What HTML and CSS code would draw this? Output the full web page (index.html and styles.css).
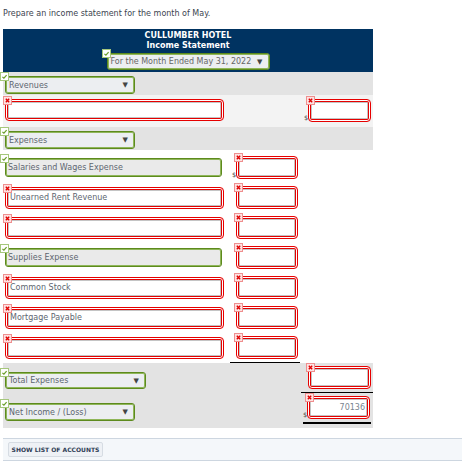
FILE: index.html
```html
<!doctype html>
<html lang="en">
<head>
    <meta charset="UTF-8">
    <title>Income Statement</title>
    <link rel="stylesheet" href="styles.css">
</head>
<body>
    <p class="prompt">Prepare an income statement for the month of May.</p>

    <div class="sheet">
        <!-- 表头 -->
        <div class="sheet-head">
            <div class="sheet-title">CULLUMBER HOTEL</div>
            <div class="sheet-title">Income Statement</div>
            <div class="fld fld-ok">
                <div class="pick pick-head">For the Month Ended May 31, 2022 <span class="arrow">&#9660;</span></div>
            </div>
        </div>

        <!-- 收入 -->
        <div class="row row-band">
            <div class="cell-label">
                <div class="fld fld-ok">
                    <div class="pick pick-sm">Revenues <span class="arrow">&#9660;</span></div>
                </div>
            </div>
        </div>
        <div class="row row-light">
            <div class="cell-label">
                <div class="fld fld-bad"><div class="box box-label"></div></div>
            </div>
            <div class="cell-mid"></div>
            <div class="cell-right">
                <span class="cur">$</span>
                <div class="fld fld-bad"><div class="box box-right"></div></div>
            </div>
        </div>

        <!-- 费用 -->
        <div class="row row-band row-exp">
            <div class="cell-label">
                <div class="fld fld-ok">
                    <div class="pick pick-sm">Expenses <span class="arrow">&#9660;</span></div>
                </div>
            </div>
        </div>

        <div class="list">
            <div class="row row-line">
                <div class="cell-label">
                    <div class="fld fld-ok"><div class="text-ok">Salaries and Wages Expense</div></div>
                </div>
                <div class="cell-mid">
                    <span class="cur">$</span>
                    <div class="fld fld-bad"><div class="box box-mid"></div></div>
                </div>
            </div>
            <div class="row row-line">
                <div class="cell-label">
                    <div class="fld fld-bad"><div class="box box-label">Unearned Rent Revenue</div></div>
                </div>
                <div class="cell-mid">
                    <div class="fld fld-bad"><div class="box box-mid"></div></div>
                </div>
            </div>
            <div class="row row-line">
                <div class="cell-label">
                    <div class="fld fld-bad"><div class="box box-label"></div></div>
                </div>
                <div class="cell-mid">
                    <div class="fld fld-bad"><div class="box box-mid"></div></div>
                </div>
            </div>
            <div class="row row-line">
                <div class="cell-label">
                    <div class="fld fld-ok"><div class="text-ok">Supplies Expense</div></div>
                </div>
                <div class="cell-mid">
                    <div class="fld fld-bad"><div class="box box-mid"></div></div>
                </div>
            </div>
            <div class="row row-line">
                <div class="cell-label">
                    <div class="fld fld-bad"><div class="box box-label">Common Stock</div></div>
                </div>
                <div class="cell-mid">
                    <div class="fld fld-bad"><div class="box box-mid"></div></div>
                </div>
            </div>
            <div class="row row-line">
                <div class="cell-label">
                    <div class="fld fld-bad"><div class="box box-label">Mortgage Payable</div></div>
                </div>
                <div class="cell-mid">
                    <div class="fld fld-bad"><div class="box box-mid"></div></div>
                </div>
            </div>
            <div class="row row-line">
                <div class="cell-label">
                    <div class="fld fld-bad"><div class="box box-label"></div></div>
                </div>
                <div class="cell-mid">
                    <div class="fld fld-bad"><div class="box box-mid"></div></div>
                </div>
            </div>
            <div class="row row-rule">
                <div></div>
                <div class="rule"></div>
            </div>
        </div>

        <!-- 合计 -->
        <div class="totals">
            <div class="row row-total">
                <div class="cell-label">
                    <div class="fld fld-ok">
                        <div class="pick pick-total">Total Expenses <span class="arrow">&#9660;</span></div>
                    </div>
                </div>
                <div></div>
                <div class="cell-sum">
                    <div class="fld fld-bad"><div class="box box-right"></div></div>
                </div>
            </div>
            <div class="row row-net">
                <div class="cell-label">
                    <div class="fld fld-ok">
                        <div class="pick pick-sm">Net Income / (Loss) <span class="arrow">&#9660;</span></div>
                    </div>
                </div>
                <div></div>
                <div class="cell-net">
                    <div class="net-wrap">
                        <span class="cur">$</span>
                        <div class="fld fld-bad"><div class="box box-right box-num">70136</div></div>
                    </div>
                </div>
            </div>
        </div>
    </div>

    <div class="accounts">
        <button class="accounts-btn">SHOW LIST OF ACCOUNTS</button>
    </div>
</body>
</html>
```

FILE: styles.css
```css
body {
    margin: 0;
    font-family: "DejaVu Sans", Verdana, sans-serif;
    font-size: 8px;
    color: #333;
    background: #fff;
}

.prompt {
    margin: 0;
    padding: 9px 3px 0;
    line-height: 10px;
    color: #3c4450;
}

.sheet {
    width: 370px;
    margin: 10px 0 0 3px;
}

.sheet-head {
    height: 43px;
    box-sizing: border-box;
    padding-top: 2px;
    background-color: #003361;
    text-align: center;
}

.sheet-title {
    color: #fff;
    font-weight: bold;
    font-size: 8px;
    line-height: 10px;
}

.sheet-head .fld {
    display: inline-block;
    margin-top: 2px;
}

/* 字段外层: 放勾/叉图标 */
.fld {
    position: relative;
}

.fld::before {
    content: "";
    position: absolute;
    width: 9px;
    height: 9px;
    z-index: 2;
}

.fld-ok::before {
    left: -5px;
    top: -4px;
    background: url("data:image/svg+xml;utf8,<svg xmlns='http://www.w3.org/2000/svg' viewBox='0 0 9 9'><rect x='.5' y='.5' width='8' height='8' fill='%23fff' stroke='%23a6c77c'/><path d='M2.4 4.9l1.5 1.3 2.7-3' stroke='%236a9d2a' stroke-width='1.2' fill='none'/></svg>");
}

.fld-bad::before {
    left: -2px;
    top: -3px;
    background: url("data:image/svg+xml;utf8,<svg xmlns='http://www.w3.org/2000/svg' viewBox='0 0 9 9'><rect x='.5' y='.5' width='8' height='8' fill='%23fde2e2' stroke='%23ef8f8f'/><path d='M2.8 2.8l3.4 3.4M6.2 2.8l-3.4 3.4' stroke='%23e00000' stroke-width='1.4'/></svg>");
}

/* 下拉框 */
.pick {
    display: flex;
    align-items: center;
    justify-content: space-between;
    box-sizing: border-box;
    padding: 0 6px 0 3px;
    border: 1px solid #5d8a1d;
    box-shadow: inset 0 0 0 1px #8fb659;
    border-radius: 3px;
    background-color: #eceef1;
    color: #5d6670;
    text-align: left;
}

.pick-head {
    width: 163px;
    height: 17px;
    color: #666;
}

.pick-sm {
    width: 130px;
    height: 18px;
}

.pick-total {
    width: 141px;
    height: 17px;
}

.arrow {
    color: #444;
    font-size: 7px;
}

.text-ok {
    box-sizing: border-box;
    width: 217px;
    height: 19px;
    margin-bottom: 2px;
    padding: 0 2px;
    line-height: 17px;
    border: 1px solid #5d8a1d;
    box-shadow: inset 0 0 0 1px #8fb659;
    border-radius: 3px;
    background-color: #eaeaea;
    color: #5d6670;
}

/* 红色错误输入框 */
.box {
    box-sizing: border-box;
    padding: 0 4px;
    border: 1px solid #e60000;
    border-radius: 4px;
    box-shadow: inset 0 0 0 1px #fff, inset 0 0 0 2px #e60000, inset 0 0 0 3px #c4c4c4;
    background-color: #fff;
    color: #5d6670;
}

.box-label {
    width: 219px;
    height: 22px;
    line-height: 20px;
}

.box-mid {
    width: 62px;
    height: 23px;
}

.box-right {
    width: 63px;
    height: 23px;
}

.box-num {
    line-height: 21px;
    text-align: right;
    color: #7a8490;
}

/* 行 */
.row {
    display: grid;
    grid-template-columns: 227px 70px 73px;
    box-sizing: border-box;
}

.cell-label {
    padding-left: 2px;
}

.cell-mid {
    display: flex;
    align-items: flex-end;
    padding-left: 2px;
}

.cell-right {
    display: flex;
    align-items: flex-end;
    padding-left: 4px;
}

.cur {
    width: 4px;
    font-size: 6.5px;
    line-height: 7px;
    color: #555;
}

.cell-mid > .fld:first-child {
    margin-left: 4px;
}

.row-band {
    height: 23px;
    padding-top: 4px;
    background-color: #e3e3e3;
}

.row-light {
    height: 32px;
    padding-top: 4px;
    background-color: #f3f3f3;
    align-items: start;
}

.row-light .cell-right {
    height: 23px;
}

.row-line {
    height: 30px;
    padding-bottom: 1px;
    align-items: end;
}

.row-rule {
    height: 3px;
}

.rule {
    height: 2px;
    border-bottom: 1px solid #000;
}

.totals {
    background-color: #e3e3e3;
}

.row-total .pick {
    margin-top: 9px;
}

.cell-sum {
    padding: 3px 3px 3px 7px;
    border-bottom: 1px solid #000;
    margin-left: 1px;
}

.row-net {
    height: 35px;
}

.row-net .pick {
    margin-top: 10px;
}

.cell-net {
    padding: 3px 0 0 3px;
}

.net-wrap {
    display: flex;
    align-items: flex-end;
    width: 68px;
    padding-bottom: 3px;
    border-bottom: 2px solid #000;
}

/* 科目列表 */
.accounts {
    margin: 10px 0 0 3px;
    padding: 3px 5px;
    border-top: 1px solid #cdd6e0;
    border-bottom: 1px solid #cdd6e0;
    background-color: #f4f7fa;
}

.accounts-btn {
    display: block;
    width: 95px;
    height: 15px;
    padding: 0;
    border: 1px solid #d6dce3;
    border-radius: 2px;
    background-color: #eef1f5;
    color: #2f3d55;
    font-family: "DejaVu Sans", Verdana, sans-serif;
    font-size: 6px;
    font-weight: bold;
}
```
